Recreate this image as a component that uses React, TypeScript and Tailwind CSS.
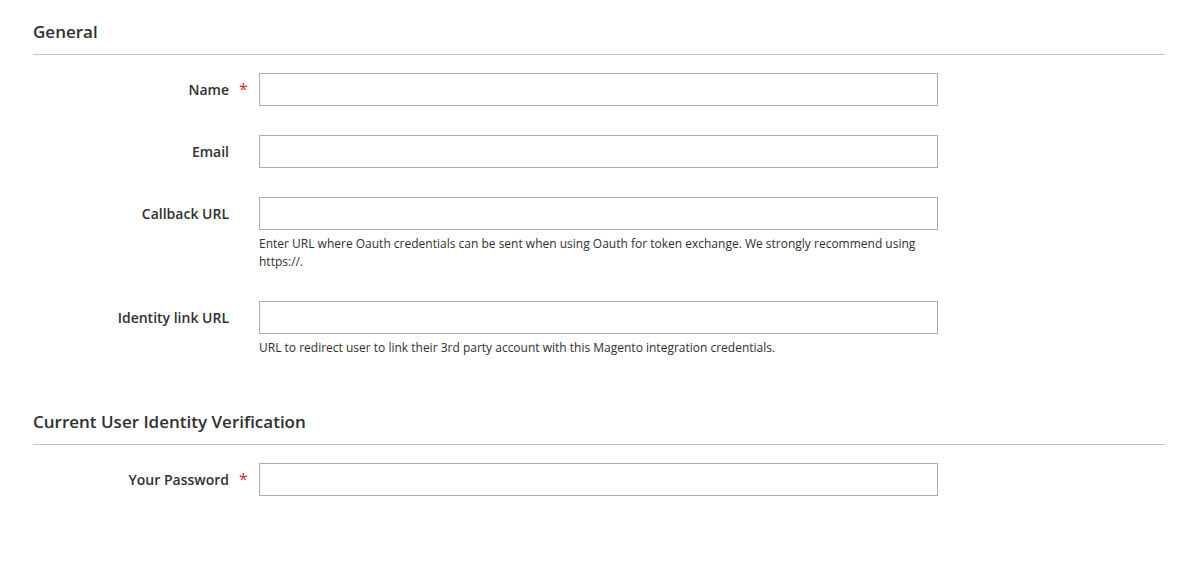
const font = { fontFamily: '"Open Sans", "Noto Sans", sans-serif' }

type Field = { label: string; required?: boolean; note?: string; type?: string }

const GENERAL: Field[] = [
  { label: 'Name', required: true },
  { label: 'Email' },
  {
    label: 'Callback URL',
    note: 'Enter URL where Oauth credentials can be sent when using Oauth for token exchange. We strongly recommend using https://.',
  },
  {
    label: 'Identity link URL',
    note: 'URL to redirect user to link their 3rd party account with this Magento integration credentials.',
  },
]

function Row({ label, required, note, type }: Field) {
  return (
    <div className="flex items-start">
      <label className="w-[196px] shrink-0 text-right text-[14px] font-semibold leading-[33px] text-[#303030]">
        {label}
      </label>
      <div className="w-[30px] shrink-0 pl-[10px] leading-[33px]">
        {required && <span className="text-[16px] text-[#e22626]">*</span>}
      </div>
      <div className="w-[679px]">
        <input type={type ?? 'text'} className="block h-[33px] w-full border border-[#adadad] bg-white px-[10px] text-[14px] outline-none" />
        {note && <div className="mt-[5px] pb-[1px] pr-[10px] text-[12px] leading-[18px] text-[#303030]">{note}</div>}
      </div>
    </div>
  )
}

function Section({ title, children }: { title: string; children: React.ReactNode }) {
  return (
    <fieldset>
      <div className="border-b border-[#cac3b4] pb-[10px] text-[17px] font-semibold leading-[24px] text-[#303030]">{title}</div>
      <div className="mt-[18px]">{children}</div>
    </fieldset>
  )
}

export default function App() {
  return (
    <div className="min-h-[571px] bg-white pl-[33px] pr-[39px] pt-[20px]" style={font}>
      <Section title="General">
        <div className="flex flex-col gap-[29px]">
          {GENERAL.map(f => <Row key={f.label} {...f} />)}
        </div>
      </Section>
      <div className="mt-[52px]">
        <Section title="Current User Identity Verification">
          <Row label="Your Password" required type="password" />
        </Section>
      </div>
    </div>
  )
}
